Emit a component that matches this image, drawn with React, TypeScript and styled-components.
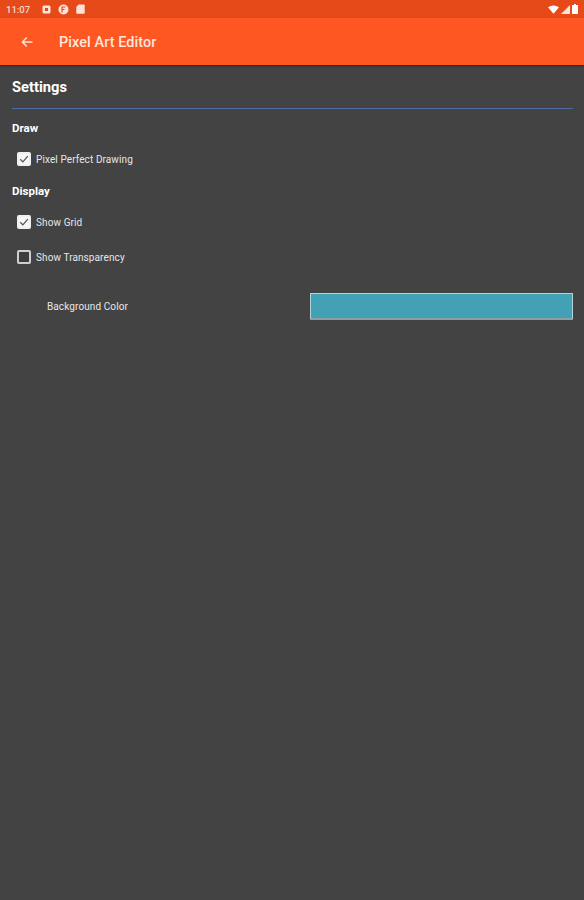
import React from "react";
import styled, { createGlobalStyle } from "styled-components";

const Global = createGlobalStyle`
  html, body { margin: 0; padding: 0; background: #434343; }
  body { font-family: Roboto, "Liberation Sans", sans-serif; }
`;

const Page = styled.div`
  width: 584px;
  height: 900px;
  background: #434343;
  color: #fff;
  overflow: hidden;
  display: flex;
  flex-direction: column;
`;

const StatusBar = styled.div`
  height: 18px;
  background: #e64a19;
  display: flex;
  align-items: center;
  padding: 0 6px 0 6px;
  flex: none;
`;

const Clock = styled.span`
  font-size: 9.5px;
  font-weight: 500;
  color: #fbd9cc;
  width: 36px;
`;

const StatusIcons = styled.div`
  display: flex;
  align-items: center;
  gap: 7px;
`;

const Spacer = styled.div`
  flex: 1;
`;

const SystemIcons = styled.div`
  display: flex;
  align-items: center;
  gap: 2px;
`;

const AppBar = styled.header`
  height: 47px;
  background: #ff5722;
  display: flex;
  align-items: center;
  padding-left: 20px;
  flex: none;
  box-shadow: 0 1px 2px rgba(0, 0, 0, 0.45);
`;

const Title = styled.h1`
  margin: 2px 0 0 25px;
  font-size: 14.4px;
  font-weight: 500;
  color: #ffe6de;
  letter-spacing: 0.1px;
`;

const Content = styled.main`
  padding: 14px 11px 0 12px;
  display: flex;
  flex-direction: column;
`;

const Heading = styled.h2`
  margin: 0;
  font-size: 14.7px;
  line-height: 16px;
  font-weight: 700;
  padding-bottom: 13px;
  border-bottom: 1px solid #4d6ea3;
`;

const Section = styled.h3<{ $top: number }>`
  margin: ${(p) => p.$top}px 0 0;
  font-size: 11.5px;
  line-height: 14px;
  font-weight: 700;
`;

const CheckRow = styled.label<{ $top: number }>`
  display: flex;
  align-items: center;
  gap: 5px;
  margin: ${(p) => p.$top}px 0 0 5px;
  height: 16px;
  font-size: 10px;
  color: #e6e6e6;
  letter-spacing: 0.1px;
`;

const Box = styled.span<{ $checked?: boolean }>`
  width: 14px;
  height: 14px;
  box-sizing: border-box;
  border-radius: 2px;
  border: 2px solid ${(p) => (p.$checked ? "#f0f0f0" : "#cfcfcf")};
  background: ${(p) => (p.$checked ? "#f6f6f6" : "#3d3d3d")};
  display: flex;
  align-items: center;
  justify-content: center;
`;

const ColorRow = styled.div`
  display: flex;
  align-items: center;
  margin-top: 27px;
  height: 28px;
`;

const ColorLabel = styled.span`
  width: 298px;
  padding-left: 35px;
  box-sizing: border-box;
  font-size: 10px;
  color: #e6e6e6;
  letter-spacing: 0.1px;
`;

const Swatch = styled.div`
  width: 263px;
  height: 27px;
  box-sizing: border-box;
  background: #42a1b4;
  border: 1px solid #b4d3d8;
  border-bottom: 2px solid #8a9ea3;
  border-radius: 1px;
`;

const Check = () => (
  <svg width="10" height="10" viewBox="0 0 10 10">
    <path d="M1.2 5.2 L3.9 7.9 L8.8 2.2" fill="none" stroke="#555" strokeWidth="1.3" />
  </svg>
);

export default function App() {
  return (
    <>
      <Global />
      <Page>
        <StatusBar>
          <Clock>11:07</Clock>
          <StatusIcons>
            <svg width="9" height="9" viewBox="0 0 9 9">
              <rect x="0.5" y="0.5" width="8" height="8" rx="1.5" fill="#fbe3da" />
              <rect x="3" y="3" width="3" height="3" fill="#e64a19" />
            </svg>
            <svg width="11" height="11" viewBox="0 0 11 11">
              <circle cx="5.5" cy="5.5" r="5" fill="#fbe3da" />
              <path d="M4 8.5V3h3.5M4 5.5h2.5" fill="none" stroke="#e64a19" strokeWidth="1.2" />
            </svg>
            <svg width="9" height="10" viewBox="0 0 9 10">
              <path d="M2.5 0.5H8a.7.7 0 0 1 .7.7V9a.7.7 0 0 1-.7.7H1a.7.7 0 0 1-.7-.7V3Z" fill="#fbe3da" />
            </svg>
          </StatusIcons>
          <Spacer />
          <SystemIcons>
            <svg width="11" height="9" viewBox="0 0 12 9">
              <path d="M0 2 Q6 -2 12 2 L6 9 Z" fill="#fff" />
            </svg>
            <svg width="9" height="9" viewBox="0 0 9 9">
              <path d="M9 0 V9 H0 Z" fill="#fbe3da" />
            </svg>
            <svg width="6" height="10" viewBox="0 0 6 10">
              <path d="M2 0h2v1h2v9H0V1h2Z" fill="#fff" />
            </svg>
          </SystemIcons>
        </StatusBar>
        <AppBar>
          <svg width="14" height="14" viewBox="0 0 14 14">
            <path d="M12.5 7H2.5M6.8 2.5 2.3 7l4.5 4.5" fill="none" stroke="#ffe3da" strokeWidth="1.4" />
          </svg>
          <Title>Pixel Art Editor</Title>
        </AppBar>
        <Content>
          <Heading>Settings</Heading>
          <Section $top={12}>Draw</Section>
          <CheckRow $top={16}>
            <Box $checked>
              <Check />
            </Box>
            Pixel Perfect Drawing
          </CheckRow>
          <Section $top={17}>Display</Section>
          <CheckRow $top={16}>
            <Box $checked>
              <Check />
            </Box>
            Show Grid
          </CheckRow>
          <CheckRow $top={19}>
            <Box />
            Show Transparency
          </CheckRow>
          <ColorRow>
            <ColorLabel>Background Color</ColorLabel>
            <Swatch />
          </ColorRow>
        </Content>
      </Page>
    </>
  );
}
